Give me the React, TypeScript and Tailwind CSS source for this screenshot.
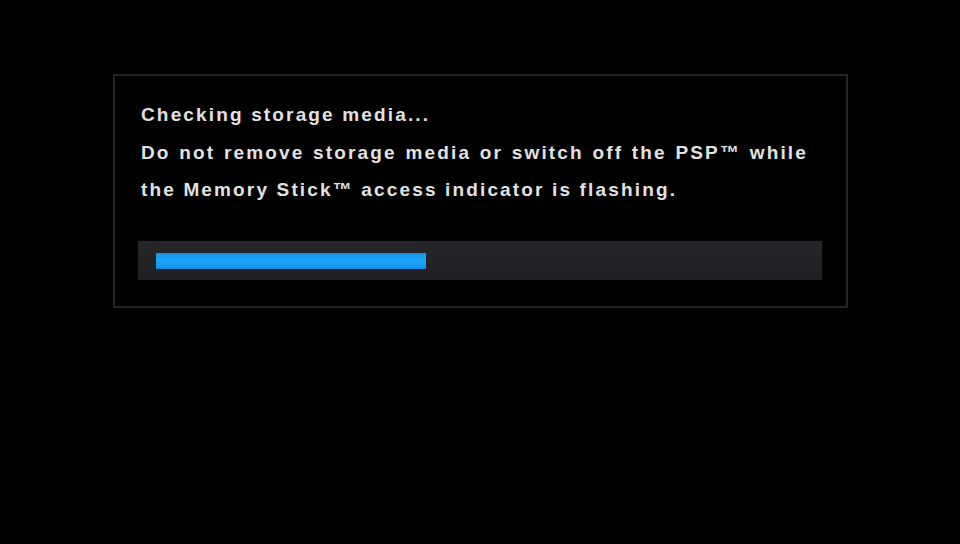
import React from 'react';

const lines = [
  'Checking storage media...',
  'Do not remove storage media or switch off the PSP™ while',
  'the Memory Stick™ access indicator is flashing.',
];

const App: React.FC = () => {
  const progress = 270 / 666;

  return (
    <div className="w-[960px] h-[544px] bg-black overflow-hidden pt-[74px]">
      <div className="ml-[113px] w-[735px] h-[234px] border-2 border-[#262626] bg-black pl-[23px] pt-[20px]">
        <div
          className="w-[667px] ml-[3px] text-[19px] leading-[37.5px] tracking-[2.15px] text-[#e2e2e2] font-bold"
          style={{ fontFamily: '"Liberation Sans", Arial, sans-serif' }}
        >
          {lines.map((line, i) => (
            <div
              key={i}
              className={i === 1 ? 'whitespace-nowrap [text-align-last:justify] text-justify' : 'whitespace-nowrap'}
            >
              {line}
            </div>
          ))}
        </div>
        <div className="mt-[32px] w-[684px] h-[39px] bg-gradient-to-b from-[#27272b] to-[#1f1f22] pl-[18px] pt-[12px]">
          <div className="w-[666px]">
            <div
              className="h-[16px] bg-gradient-to-b from-[#1494e6] via-[#1aa8f8] to-[#0f8ee6]"
              style={{ width: `${progress * 100}%` }}
            />
          </div>
        </div>
      </div>
    </div>
  );
};

export default App;
